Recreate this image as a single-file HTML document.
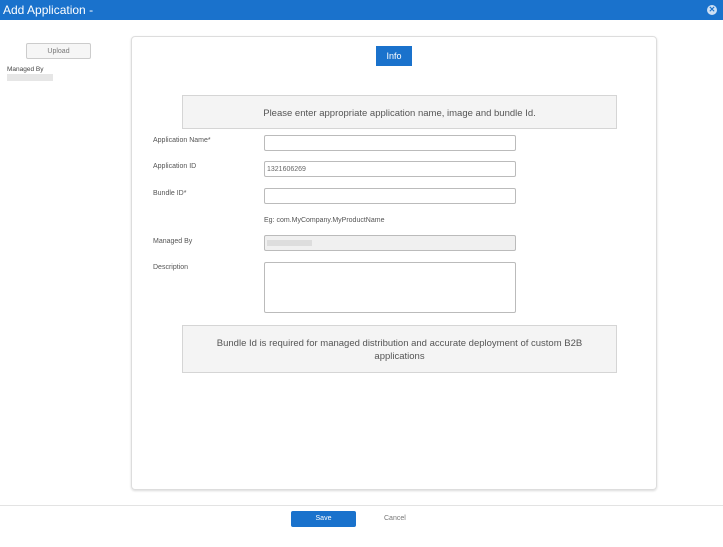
<!DOCTYPE html>
<html><head><style>
*{box-sizing:border-box;margin:0;padding:0}
body{width:723px;height:547px;background:#fff;font-family:"Liberation Sans",sans-serif;position:relative;overflow:hidden;color:#555}
.a{position:absolute}
.hdr{left:0;top:0;width:723px;height:20px;background:#1a72cc;color:#fff;font-size:12px;line-height:20px;padding-left:3px}
.x{right:6px;top:5px;width:10px;height:10px;border-radius:50%;background:#cfe0f4;color:#1a72cc;font-size:8px;line-height:10px;text-align:center;font-weight:bold}
.lbl{left:153px;font-size:7px;color:#555}
.in{left:264px;width:252px;height:16px;border:1px solid #bbb;border-radius:2px;background:#fff;font-size:7px;line-height:16px;padding-left:2px;color:#666}
.msg{left:182px;width:435px;background:#f4f4f4;border:1px solid #d5d5d5;font-size:9.5px;color:#555;text-align:center}
</style></head><body>
<div class="a hdr">Add Application -</div>
<div class="a x">✕</div>
<div class="a" style="left:26px;top:43px;width:65px;height:16px;border:1px solid #ccc;border-radius:2px;background:#f6f6f6;font-size:7px;color:#777;text-align:center;line-height:16px">Upload</div>
<div class="a" style="left:7px;top:66px;font-size:6.5px;color:#444">Managed By</div>
<div class="a" style="left:7px;top:74px;width:46px;height:7px;background:#e6e6e6"></div>
<div class="a" style="left:131px;top:36px;width:526px;height:454px;border:1px solid #ddd;border-radius:4px;box-shadow:0 1px 2px rgba(0,0,0,.15)"></div>
<div class="a" style="left:376px;top:46px;width:36px;height:20px;background:#1a72cc;color:#fff;font-size:9px;text-align:center;line-height:20px">Info</div>
<div class="a msg" style="top:95px;height:34px;line-height:35px">Please enter appropriate application name, image and bundle Id.</div>
<div class="a lbl" style="top:137px">Application Name*</div>
<div class="a in" style="top:135px"></div>
<div class="a lbl" style="top:163px">Application ID</div>
<div class="a in" style="top:161px">1321606269</div>
<div class="a lbl" style="top:190px">Bundle ID*</div>
<div class="a in" style="top:188px"></div>
<div class="a" style="left:264px;top:217px;font-size:7px;color:#555">Eg: com.MyCompany.MyProductName</div>
<div class="a lbl" style="top:238px">Managed By</div>
<div class="a in" style="top:235px;background:#f0f0f0"><span style="display:inline-block;width:45px;height:6px;background:#ddd;vertical-align:middle"></span></div>
<div class="a lbl" style="top:264px">Description</div>
<div class="a in" style="top:262px;height:51px"></div>
<div class="a msg" style="top:325px;height:48px;padding-top:11px;line-height:13px">Bundle Id is required for managed distribution and accurate deployment of custom B2B<br>applications</div>
<div class="a" style="left:0;top:505px;width:723px;height:1px;background:#e3e3e3"></div>
<div class="a" style="left:291px;top:511px;width:65px;height:16px;background:#1a72cc;border-radius:2px;color:#fff;font-size:7px;text-align:center;line-height:16px">Save</div>
<div class="a" style="left:384px;top:515px;font-size:7px;color:#777">Cancel</div>
</body></html>
